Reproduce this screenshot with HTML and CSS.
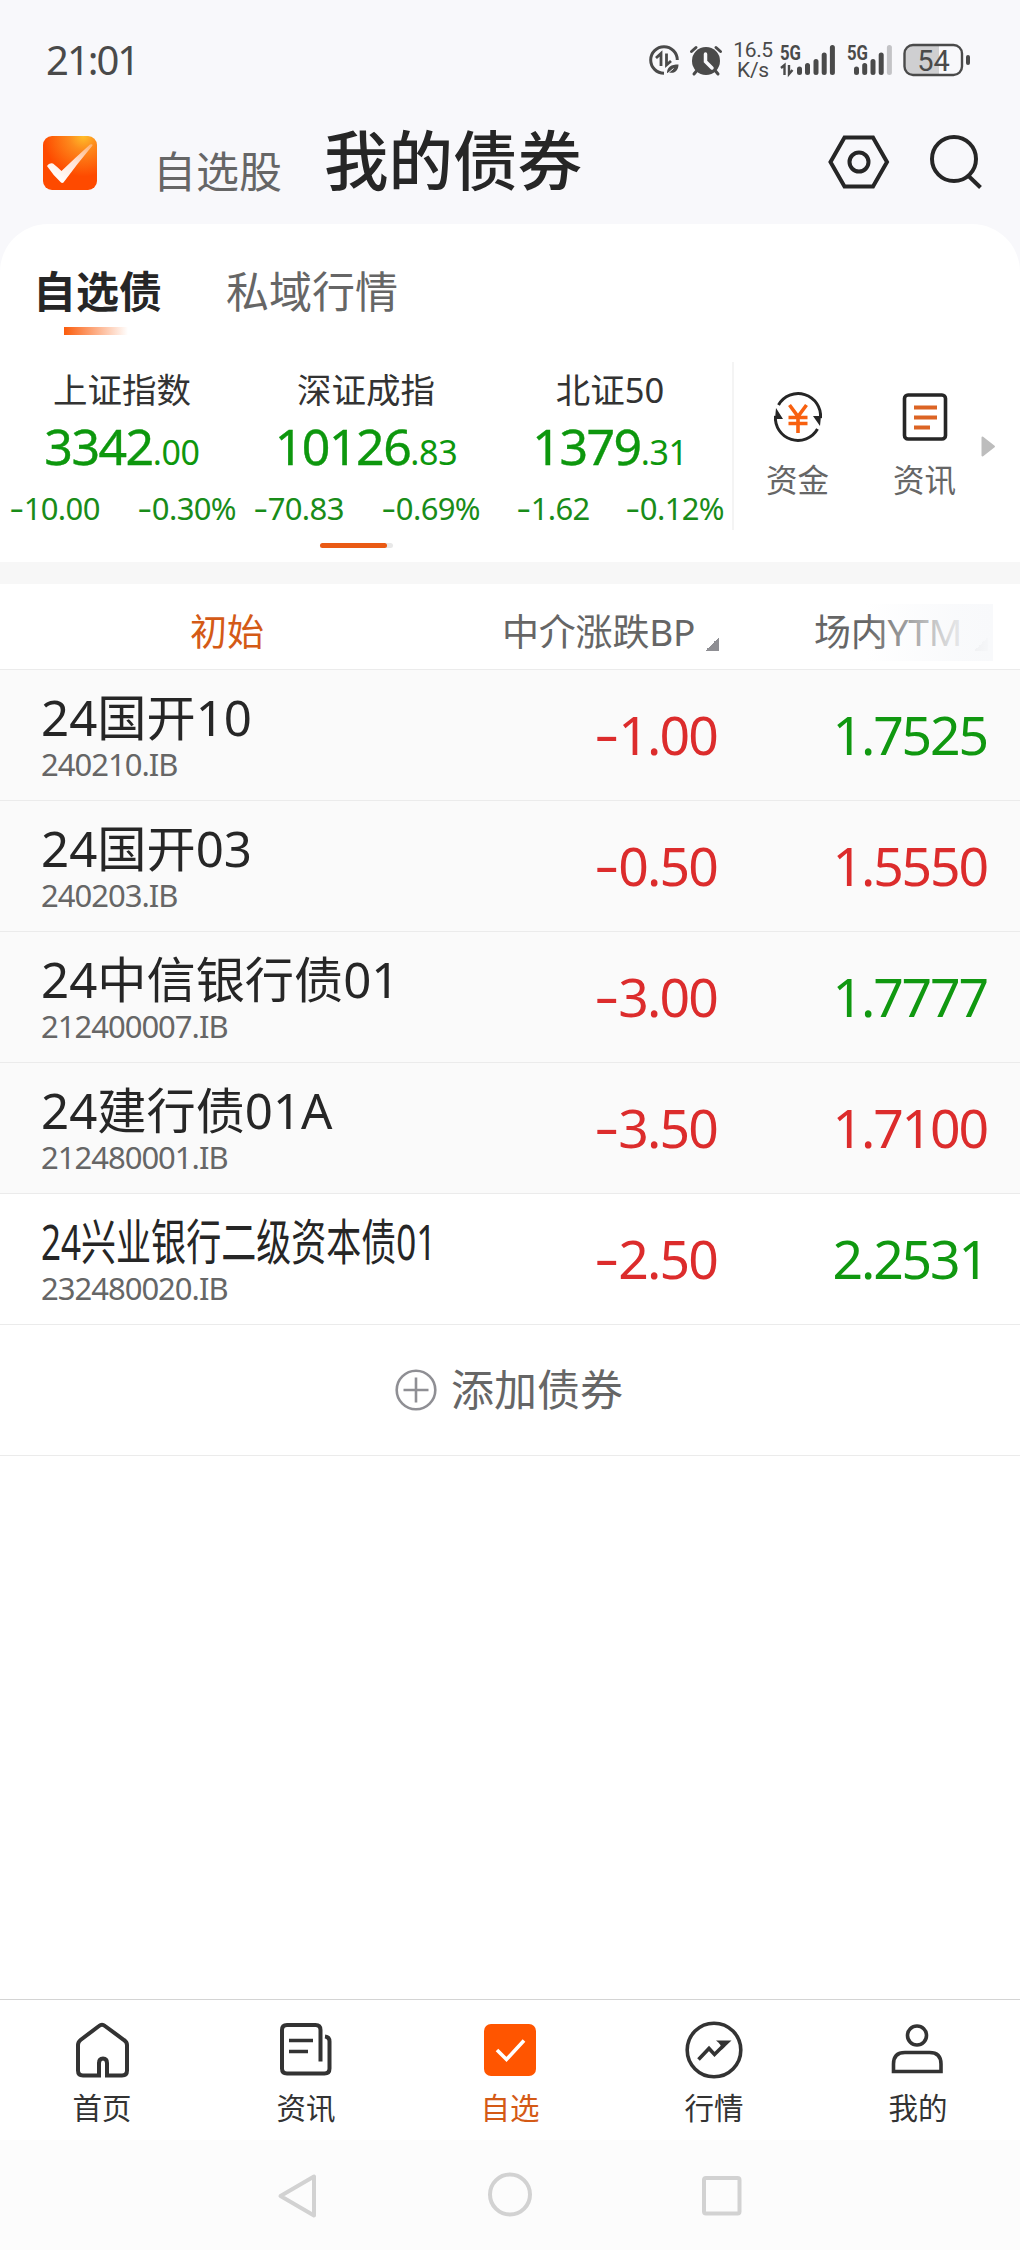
FILE: index.html
```html
<!DOCTYPE html>
<html lang="zh-CN">
<head>
<meta charset="utf-8">
<title>我的债券</title>
<link rel="stylesheet" href="styles.css">
</head>
<body>
<div class="status">
  <span class="clock">21:01</span>
  <div class="status-icons">
    <svg class="ic-data" width="32" height="32" viewBox="0 0 32 32" fill="none" stroke="#4a4a4a" stroke-width="3">
      <path d="M16 29.3A13.3 13.3 0 1 1 29.3 16"/>
      <path d="M8 14l5-4.500v12.500M18.500 9.500v11.500l4.500-4" stroke-width="2.800"/>
      <path d="M19 29c0-6 4-8.500 11.500-8.500 0 6-4 9.500-9 8z" fill="#4a4a4a" stroke="none"/>
      <path d="M18.500 30.500l7-6" stroke="#f8f8fb" stroke-width="1"/>
    </svg>
    <svg class="ic-alarm" width="34" height="32" viewBox="0 0 34 32" fill="none" stroke="#4a4a4a" stroke-width="3" stroke-linecap="round">
      <circle cx="17" cy="17" r="14" fill="#4a4a4a" stroke="none"/>
      <path d="M2.500 7.500l4.500-4M31.500 7.500l-4.500-4M7.500 27l-2.500 3M26.500 27l2.500 3"/>
      <path d="M16.500 10v7.500l6.500 6.500" stroke="#f8f8fb" stroke-width="3.500"/>
    </svg>
    <div class="speed"><span>16.5</span><span>K/s</span></div>
    <svg class="ic-sig1" width="56" height="32" viewBox="0 0 56 32">
      <text x="0" y="16" class="net" textLength="21" lengthAdjust="spacingAndGlyphs">5G</text>
      <g stroke="#4a4a4a" stroke-width="5" stroke-linecap="round"><path d="M19.500 25v3.500M27.500 21.500v7M36 17.500v11M44.200 11v17.500M52.400 3.500v25"/></g>
      <path d="M1 24l3.500-3v10M9 21v9l3.500-4" fill="none" stroke="#4a4a4a" stroke-width="2.400"/>
    </svg>
    <svg class="ic-sig2" width="46" height="32" viewBox="0 0 46 32">
      <text x="0" y="16" class="net" textLength="21" lengthAdjust="spacingAndGlyphs">5G</text>
      <g stroke="#4a4a4a" stroke-width="5" stroke-linecap="round"><path d="M9.500 25v3.500M17.700 21.500v7M26 17.500v11M34.200 11v17.500"/><path d="M42.400 3.500v25" stroke="#c3c3c6"/></g>
    </svg>
    <svg class="ic-bat" width="68" height="34" viewBox="0 0 68 34">
      <path d="M10 2h26v30H10q-8 0-8-8V10q0-8 8-8z" fill="#cfcfd1"/>
      <rect x="1.500" y="2" width="57.500" height="30" rx="8.500" fill="none" stroke="#4a4a4a" stroke-width="2.400"/>
      <rect x="63" y="12" width="4" height="10" rx="2" fill="#4a4a4a"/>
      <text x="30.500" y="27.500" class="bat" text-anchor="middle">54</text>
    </svg>
  </div>
</div>

<header class="top">
  <svg class="logo" width="54" height="54" viewBox="0 0 54 54">
    <defs>
      <radialGradient id="lg" cx=".75" cy="0" r=".75"><stop offset="0" stop-color="#ffbe2a"/><stop offset=".35" stop-color="#fd8a1c"/><stop offset="1" stop-color="#fe4a00"/></radialGradient>
      <linearGradient id="ck" x1="1" y1="0" x2=".3" y2="1"><stop offset="0" stop-color="#ffb070"/><stop offset=".5" stop-color="#ffe4d8"/><stop offset="1" stop-color="#fff"/></linearGradient>
    </defs>
    <rect width="54" height="54" rx="9" fill="url(#lg)"/>
    <path d="M4 30q2-3.500 6-2.500 5 4 8.500 7.500Q32 22 47 8.500q3-1 2.500 1Q34 28 20.500 46.500q-1.500 1-3-.500Q10 39 4 30z" fill="url(#ck)"/>
  </svg>
  <span class="top-link">自选股</span>
  <h1 class="top-title">我的债券</h1>
  <svg class="ic-set" width="62" height="54" viewBox="0 0 62 54" fill="none" stroke="#262626" stroke-width="4">
    <path d="M16.500 2.500h28.500L59 27 45 51.500H16.500L2.500 27z"/><circle cx="31" cy="27" r="9.500"/>
  </svg>
  <svg class="ic-search" width="54" height="56" viewBox="0 0 54 56" fill="none" stroke="#262626" stroke-width="4">
    <circle cx="25" cy="25" r="22"/><path d="M39.500 42l12 11.500"/>
  </svg>
</header>

<main class="panel">
  <nav class="tabs"><span class="tab on">自选债</span><span class="tab">私域行情</span></nav>

  <section class="market">
    <div class="indices">
      <div class="index">
        <div class="iname">上证指数</div>
        <div class="ival">3342<small>.00</small></div>
        <div class="ichg"><span><i class="m">-</i>10.00</span><span><i class="m">-</i>0.30%</span></div>
      </div>
      <div class="index">
        <div class="iname">深证成指</div>
        <div class="ival">10126<small>.83</small></div>
        <div class="ichg"><span><i class="m">-</i>70.83</span><span><i class="m">-</i>0.69%</span></div>
      </div>
      <div class="index">
        <div class="iname">北证50</div>
        <div class="ival">1379<small>.31</small></div>
        <div class="ichg"><span><i class="m">-</i>1.62</span><span><i class="m">-</i>0.12%</span></div>
      </div>
    </div>
    <div class="shortcuts">
      <div class="short">
        <svg width="50" height="50" viewBox="0 0 50 50" fill="none" stroke="#262626" stroke-width="3">
          <path d="M5.500 13A22.500 22.500 0 0 1 47.500 26M44.500 37A22.500 22.500 0 0 1 2.500 24"/>
          <path d="M3 16L10 27H2zM47 34L40 24h8z" fill="#262626" stroke="none"/>
          <path d="M16.500 13l8.500 11.500L33.500 13M25 24v17M15.500 25.500h19M15.500 31.500h19" stroke="#f8600f" stroke-width="3.600"/>
        </svg>
        <span>资金</span>
      </div>
      <div class="short">
        <svg width="50" height="50" viewBox="0 0 50 50" fill="none">
          <rect x="4.500" y="3" width="41" height="44" rx="3.500" stroke="#262626" stroke-width="3.600"/>
          <path d="M14 15.500h23M14 25.500h23M14 35.500h16" stroke="#dc6424" stroke-width="4"/>
        </svg>
        <span>资讯</span>
      </div>
      <svg class="more" width="15" height="21" viewBox="0 0 15 21"><path d="M1.500 1.500L13 10.500 1.500 19.500z" fill="#bdbdbd" stroke="#bdbdbd" stroke-width="2" stroke-linejoin="round"/></svg>
    </div>
  </section>
  <div class="pager"><i></i></div>
</main>

<section class="table">
  <div class="row head">
    <span class="hname">初始</span>
    <span class="hbp">中介涨跌BP<i class="tri"></i></span>
    <span class="hytm">场内YTM<i class="tri"></i></span>
  </div>
  <div class="row held"><div class="bond"><b>24国开10</b><span>240210.IB</span></div><div class="bp"><i class="m">-</i>1.00</div><div class="ytm down">1.7525</div></div>
  <div class="row held"><div class="bond"><b>24国开03</b><span>240203.IB</span></div><div class="bp"><i class="m">-</i>0.50</div><div class="ytm">1.5550</div></div>
  <div class="row held"><div class="bond"><b>24中信银行债01</b><span>212400007.IB</span></div><div class="bp"><i class="m">-</i>3.00</div><div class="ytm down">1.7777</div></div>
  <div class="row held"><div class="bond"><b>24建行债01A</b><span>212480001.IB</span></div><div class="bp"><i class="m">-</i>3.50</div><div class="ytm">1.7100</div></div>
  <div class="row"><div class="bond"><b class="narrow">24兴业银行二级资本债01</b><span>232480020.IB</span></div><div class="bp"><i class="m">-</i>2.50</div><div class="ytm down">2.2531</div></div>
  <div class="row add">
    <svg width="42" height="42" viewBox="0 0 42 42" fill="none" stroke="#8f8f94" stroke-width="2.600"><circle cx="21" cy="21" r="19.300"/><path d="M8.500 21h25M21 8.500v25"/></svg>
    <span>添加债券</span>
  </div>
</section>

<nav class="bottom">
  <div class="item">
    <svg width="60" height="60" viewBox="0 0 60 60" fill="none" stroke="#333" stroke-width="4"><path d="M27 55.500H11q-5 0-5-5V25q0-3 2.500-5L27 6q3-2.500 6 0l19 14q3 2 3 5v25.500q0 5-5 5H35V43q0-4.500-4-4.500T27 43v14.500M35 43v14.500"/></svg>
    <span>首页</span>
  </div>
  <div class="item">
    <svg width="60" height="60" viewBox="0 0 60 60" fill="none" stroke="#333" stroke-width="4"><path d="M44.500 41.500V10q0-5-5-5H11Q6 5 6 10v38.500q0 5 5 5h37.500q5 0 5-5V21.500q0-4.500-4.500-5"/><path d="M13 20.500h24M13 31.500h19" stroke-width="3.600"/></svg>
    <span>资讯</span>
  </div>
  <div class="item on">
    <svg width="60" height="60" viewBox="0 0 60 60" fill="none"><rect x="4" y="4" width="52" height="52" rx="7" fill="#ff5500"/><path d="M17 30l9.500 9.500L44 20.500" stroke="#fff" stroke-width="3.600"/></svg>
    <span>自选</span>
  </div>
  <div class="item">
    <svg width="60" height="60" viewBox="0 0 60 60" fill="none" stroke="#333" stroke-width="3.600"><circle cx="30" cy="30" r="26.800"/><path d="M14.500 39.500l10.500-11 5.500 6L40 25"/><path d="M32 20.500h15.500L37.500 30q0-6-5.500-9.500z" fill="#333" stroke="none"/></svg>
    <span>行情</span>
  </div>
  <div class="item">
    <svg width="60" height="60" viewBox="0 0 60 60" fill="none" stroke="#333" stroke-width="3.600"><circle cx="29" cy="15.500" r="9.500"/><path d="M5.500 51.500V44q0-11.500 11.500-11.500h24.500Q53 32.500 53 44v7.500z"/></svg>
    <span>我的</span>
  </div>
</nav>

<div class="sysnav">
  <svg width="60" height="60" viewBox="0 0 60 60" fill="none" stroke="#d2d2d2" stroke-width="4" stroke-linejoin="round"><path d="M46 11.500v39L12.500 31z"/></svg>
  <svg width="60" height="60" viewBox="0 0 60 60" fill="none" stroke="#d2d2d2" stroke-width="4"><circle cx="30" cy="29.500" r="20"/></svg>
  <svg width="60" height="60" viewBox="0 0 60 60" fill="none" stroke="#d2d2d2" stroke-width="4"><rect x="12" y="13" width="35.500" height="35.500" rx="2"/></svg>
</div>
</body>
</html>
```
FILE: styles.css
```css
* { box-sizing: border-box; }
body {
  margin: 0;
  width: 1020px;
  height: 2250px;
  display: flex;
  flex-direction: column;
  background: #f8f8fb;
  color: #262626;
  font-family: "Noto Sans", "Noto Sans CJK SC", sans-serif;
  overflow: hidden;
}
svg { display: block; flex: none; overflow: visible; }
i { font-style: normal; }

/* status bar */
.status { height: 120px; display: flex; justify-content: space-between; padding: 0 49px 0 46px; color: #4a4a4a; }
.clock { font-size: 40px; line-height: 119px; letter-spacing: -2px; }
.status-icons { display: flex; align-items: center; }
.ic-alarm { margin-left: 9px; }
.speed { width: 40px; margin-left: 10px; display: flex; flex-direction: column; align-items: center; font: 21px/20px Roboto, sans-serif; letter-spacing: -.3px; }
.ic-sig1 { margin-left: 7px; }
.ic-sig2 { margin-left: 11px; }
.ic-bat { margin-left: 10px; }
.net { font: 700 20px Roboto, sans-serif; fill: #4a4a4a; }
.bat { font: 400 29px Roboto, sans-serif; fill: #4a4a4a; }

/* title bar */
.top { height: 104px; display: flex; align-items: flex-start; padding: 0 37px 0 43px; }
.logo { margin-top: 16px; }
.top-link { margin: 26px 0 0 56px; font-size: 43px; line-height: 52px; color: #666; }
.top-title { margin: 0 0 0 42px; padding-top: 2px; font-size: 64.500px; line-height: 76px; font-weight: 500; flex: 1; }
.ic-set { margin-top: 15px; }
.ic-search { margin: 14px 0 0 39px; }

/* index panel */
.panel { height: 338px; background: #fff; border-radius: 48px 48px 0 0; display: flex; flex-direction: column; flex: none; }
.tabs { height: 138px; display: flex; gap: 64px; padding: 42px 0 0 33px; }
.tab { height: 71px; font-size: 43px; line-height: 52px; color: #666; }
.tab.on { color: #262626; font-weight: 700; display: flex; flex-direction: column; }
.tab.on::after { content: ""; width: 64px; height: 8px; margin: 9px 0 0 31px; background: linear-gradient(90deg, #fb5c0c, rgba(251, 92, 12, 0)); }
.market { height: 168px; display: flex; }
.indices { width: 734px; display: flex; border-right: 2px solid #f4f4f4; }
.index { width: 244px; padding-left: 0; display: flex; flex-direction: column; text-align: center; flex: none; }
.iname { font-size: 34.500px; line-height: 56px; color: #333; }
.ival { font-size: 50px; line-height: 57px; letter-spacing: -.03em; color: #0d970d; -webkit-text-stroke: .4px; }
.ival small { font-size: 34px; letter-spacing: -.01em; -webkit-text-stroke: 0; }
.ichg { padding: 0 8px 0 10px; display: flex; justify-content: space-between; font-size: 31px; line-height: 54px; letter-spacing: -.02em; color: #198c19; }
.index:nth-child(3) .ichg { padding-left: 29px; }
.m { display: inline-block; width: .44em; text-align: center; letter-spacing: 0; transform: translateY(-.03em) scaleX(1.45); }
.shortcuts { flex: 1; display: flex; }
.short { width: 127px; padding-top: 30px; display: flex; flex-direction: column; align-items: center; font-size: 31.500px; line-height: 40px; color: #666; gap: 18px; }
.more { margin: 74px 0 0 -7px; }
.pager { width: 73px; height: 5px; margin: 13px 0 0 320px; border-radius: 3px; background: #e8e8e8; }
.pager i { display: block; width: 67px; height: 5px; border-radius: 3px; background: #ea5a14; }

/* bond table */
.table { flex: 1; border-top: 22px solid #f7f7f7; background: #fff; }
.row { height: 131px; display: grid; grid-template-columns: 460px 257px 1fr; align-items: center; border-bottom: 1px solid #ebebeb; padding-right: 33px; }
.held { background: #fafafa; }
.head { height: 86px; font-size: 37px; line-height: 56px; color: #666; padding: 20px 0 0; grid-template-columns: 502px 312px 1fr; align-items: start; }
.hname { padding-left: 190px; color: #d45a16; }
.hbp, .hytm { display: flex; align-items: flex-start; letter-spacing: -.2px; }
.tri { width: 14px; height: 14px; margin: 33px 0 0 10px; background: linear-gradient(135deg, transparent 50%, #8f8f94 50%); }
.hytm { width: 179px; height: 57px; position: relative; }
.hytm .tri { margin-left: 12px; }
.hytm::after { content: ""; position: absolute; inset: 0 0 0 52px; background: linear-gradient(90deg, rgba(248, 249, 251, 0), rgba(248, 249, 251, .85) 70%, #f8f9fb); }
.bond { padding: 2px 0 0 41px; display: flex; flex-direction: column; white-space: nowrap; }
.bond b { font-weight: 400; font-size: 49.200px; line-height: 56px; transform-origin: 0 50%; }
.bond span { font-size: 31px; line-height: 38px; letter-spacing: -1px; color: #666; }
.bond .narrow { transform: scaleX(.712); width: max-content; }
.bp, .ytm { text-align: right; font-size: 53.500px; line-height: 60px; letter-spacing: -.035em; color: #dc2c2c; }
.ytm { letter-spacing: -.04em; }
.ytm.down { color: #109810; }
.add { display: flex; justify-content: center; gap: 14px; padding: 0 2px 0 0; font-size: 43px; line-height: 52px; color: #666; }

/* app navigation */
.bottom { height: 141px; flex: none; display: flex; background: #fff; border-top: 1px solid #d4d4d4; }
.item { flex: 1; padding-top: 20px; display: flex; flex-direction: column; align-items: center; font-size: 29.500px; line-height: 40px; gap: 8px; color: #333; }
.item.on { color: #d45a16; }

/* system navigation */
.sysnav { height: 110px; flex: none; display: flex; justify-content: center; gap: 152px; padding-top: 25px; background: #fcfcfc; }
```
